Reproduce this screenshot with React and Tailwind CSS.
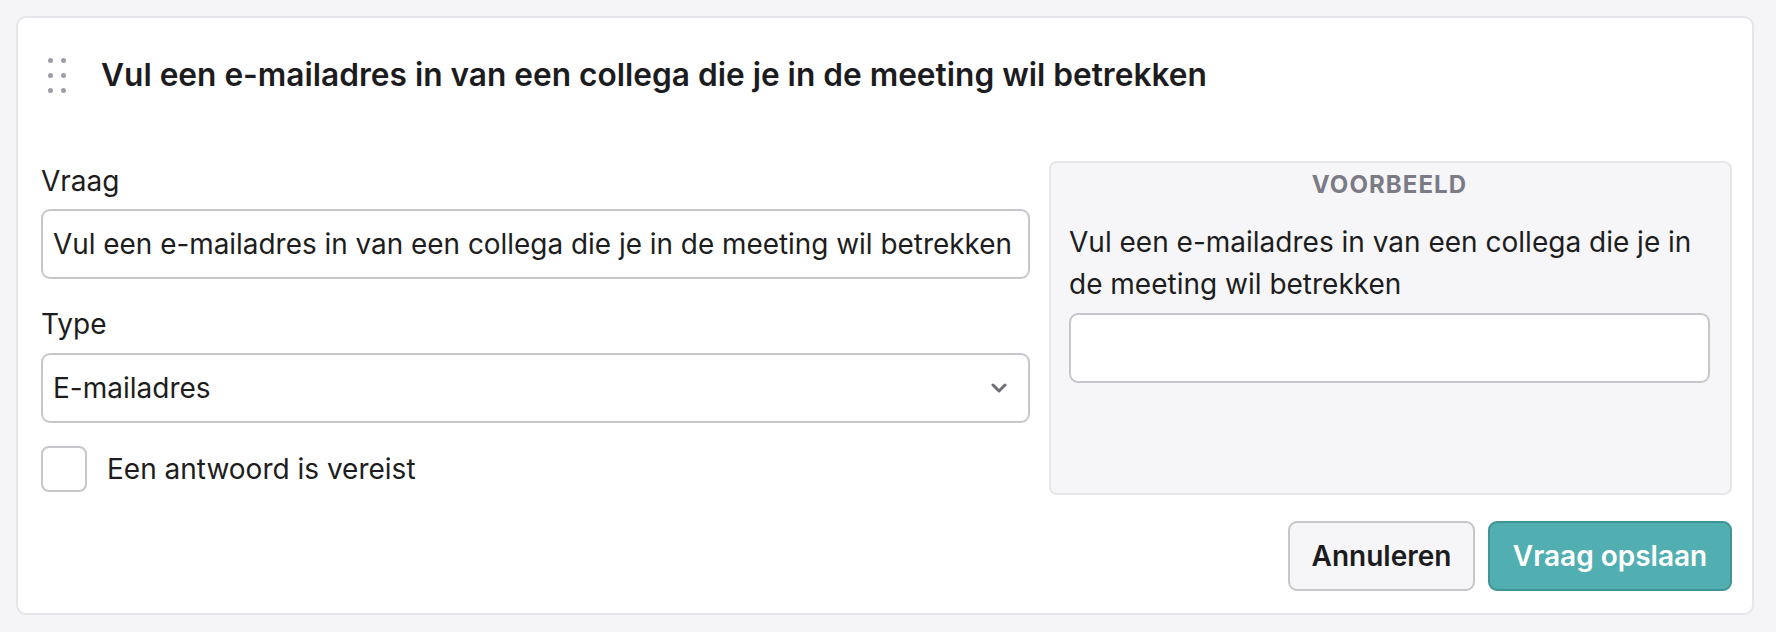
import React from "react";

function DragHandle() {
  return (
    <div className="grid grid-cols-2 gap-x-[8px] gap-y-[10px] w-[18px]">
      {[0, 1, 2, 3, 4, 5].map((i) => (
        <span key={i} className="block h-[5px] w-[5px] rounded-full bg-[#9d9da6]" />
      ))}
    </div>
  );
}

export default function App() {
  return (
    <div
      className="h-[632px] bg-[#f5f5f7] pl-4 pt-4 pr-[22px] text-[#1d1d20]"
      style={{ fontFamily: "Inter, 'Noto Sans', sans-serif" }}
    >
      <div className="rounded-[10px] border-2 border-[#e6e6ea] bg-white pl-[23px] pr-[20px] pt-[37px] pb-[22px]">
        <div className="flex h-[40px] items-center px-[7px]">
          <DragHandle />
          <h1 className="ml-[35px] text-[31.65px] leading-[40px] font-semibold text-[#1c1c1f]">
            Vul een e-mailadres in van een collega die je in de meeting wil betrekken
          </h1>
        </div>

        <div className="mt-[66px] flex gap-[19px]">
          <div className="w-[989px] shrink-0">
            <label className="block text-[28px] leading-[40px]">Vraag</label>
            <div className="mt-[8px] flex h-[70px] items-center rounded-[9px] border-2 border-[#c6c6cb] bg-white px-[10px] text-[27.9px] leading-[40px] whitespace-nowrap overflow-hidden">
              Vul een e-mailadres in van een collega die je in de meeting wil betrekken
            </div>

            <label className="mt-[25px] block text-[28px] leading-[40px]">Type</label>
            <div className="mt-[9px] flex h-[70px] items-center justify-between rounded-[9px] border-2 border-[#c6c6cb] bg-white pl-[10px] pr-[21px] text-[28px] leading-[40px]">
              <span>E-mailadres</span>
              <svg width="16" height="10" viewBox="0 0 16 10" fill="none">
                <polyline
                  points="2,2 8,8 14,2"
                  stroke="#6e6e78"
                  strokeWidth="3"
                  strokeLinecap="round"
                  strokeLinejoin="round"
                />
              </svg>
            </div>

            <div className="mt-[23px] flex items-center gap-[20px]">
              <span className="block h-[46px] w-[46px] rounded-[8px] border-2 border-[#c6c6cb] bg-white" />
              <span className="text-[28px] leading-[40px]">Een antwoord is vereist</span>
            </div>
          </div>

          <div className="h-[334px] flex-1 rounded-[8px] border-2 border-[#e6e6ea] bg-[#f6f6f8] pl-[18px] pr-[20px] pt-[6px]">
            <div className="text-center text-[24px] leading-[32px] font-bold tracking-[0.045em] text-[#7b7b85]">
              VOORBEELD
            </div>
            <p className="mt-[20px] text-[28px] leading-[42px]">
              Vul een e-mailadres in van een collega die je in de meeting wil betrekken
            </p>
            <div className="mt-[8px] h-[70px] rounded-[9px] border-2 border-[#c6c6cb] bg-white" />
          </div>
        </div>

        <div className="mt-[26px] flex justify-end gap-[13px]">
          <button className="flex h-[70px] w-[187px] items-center justify-center rounded-[9px] border-2 border-[#c6c6cb] bg-[#f6f6f8] text-[28px] font-semibold text-[#1c1c1f]">
            Annuleren
          </button>
          <button className="flex h-[70px] w-[244px] items-center justify-center rounded-[9px] border-2 border-[#3f9496] bg-[#52afb1] text-[28px] font-semibold text-white">
            Vraag opslaan
          </button>
        </div>
      </div>
    </div>
  );
}
